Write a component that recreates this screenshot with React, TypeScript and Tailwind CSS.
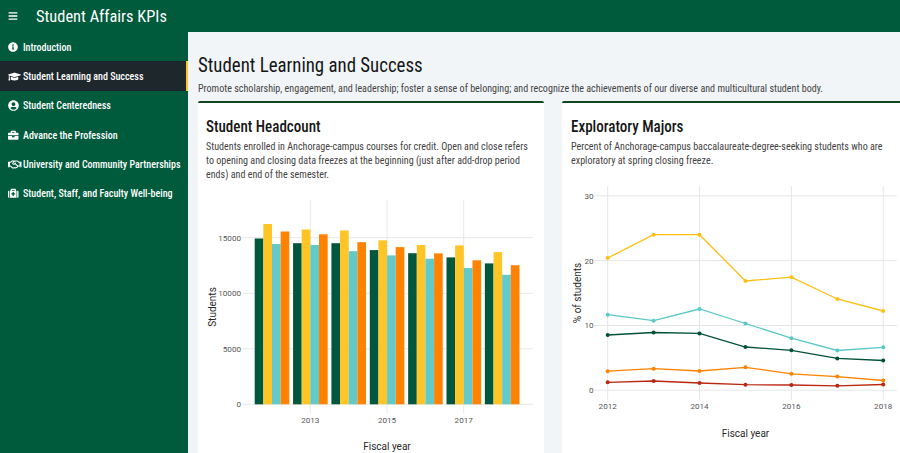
import type { ReactNode } from 'react';
import { FaBars, FaInfoCircle, FaGraduationCap, FaUserCircle, FaBriefcase, FaRegHandshake, FaMedkit } from 'react-icons/fa';

const nav: { icon: ReactNode; label: string; active?: boolean }[] = [
  { icon: <FaInfoCircle size={10} />, label: 'Introduction' },
  { icon: <FaGraduationCap className="h-[11px] w-[13px]" />, label: 'Student Learning and Success', active: true },
  { icon: <FaUserCircle className="h-[11px] w-[11px]" />, label: 'Student Centeredness' },
  { icon: <FaBriefcase className="h-[10.5px] w-[10.5px]" />, label: 'Advance the Profession' },
  { icon: <FaRegHandshake className="h-[11px] w-[13.5px]" />, label: 'University and Community Partnerships' },
  { icon: <FaMedkit className="h-[10.5px] w-[10.5px]" />, label: 'Student, Staff, and Faculty Well-being' },
];

const barColors = ['#00573d', '#ffc425', '#63c9c9', '#ff8200'];
const barTops = [
  [238.5, 224, 244, 231.5],
  [243.2, 229.5, 245, 234.3],
  [243.2, 230.5, 251.2, 242.2],
  [250.1, 240.3, 255.4, 247.1],
  [253.2, 245, 258.7, 253.4],
  [257.4, 245.4, 268, 260.3],
  [263.4, 252.1, 274.8, 265.2],
];

const series = [
  { color: '#ffbf12', ys: [258, 234.7, 234.7, 281, 277.2, 299, 311] },
  { color: '#5bc8c8', ys: [314.7, 320.7, 309, 323.5, 338.2, 350.5, 347.3] },
  { color: '#005137', ys: [335, 332.5, 333.4, 347, 350.3, 358.4, 360.5] },
  { color: '#ff8200', ys: [371.2, 368.7, 371, 367.3, 373.8, 376.6, 380.5] },
  { color: '#b9270f', ys: [382.3, 381, 383, 384.7, 385, 385.8, 384.5] },
];
const lineX = (i: number) => 607.7 + i * 45.92;

function BarChart() {
  return (
    <svg width="346" height="268" viewBox="198 185 346 268" className="block font-[Roboto,sans-serif] [font-stretch:100%]">
      <g stroke="#e8e8e8" strokeWidth="1">
        {[237.7, 293.3, 348.8, 404.3].map((y) => <path key={y} d={`M242 ${y}H533`} />)}
        {[310.3, 387, 463.7].map((x) => <path key={x} d={`M${x} 200V413`} />)}
      </g>
      {barTops.map((group, g) =>
        group.map((y, i) => (
          <rect key={`${g}-${i}`} x={254.7 + g * 38.36 + i * 8.65} y={y} width="8.65" height={404.3 - y} fill={barColors[i]} />
        )),
      )}
      <g fill="#555" fontSize="8.1" textAnchor="end">
        <text x="241" y="240.7">15000</text>
        <text x="241" y="296.3">10000</text>
        <text x="241" y="351.8">5000</text>
        <text x="241" y="407.2">0</text>
      </g>
      <g fill="#555" fontSize="8.1" textAnchor="middle">
        <text x="310.3" y="422.8">2013</text>
        <text x="387" y="422.8">2015</text>
        <text x="463.7" y="422.8">2017</text>
      </g>
      <g fill="#2a2a2a" fontSize="10" textAnchor="middle">
        <text x="387" y="450.4">Fiscal year</text>
        <text transform="translate(216 307) rotate(-90)">Students</text>
      </g>
    </svg>
  );
}

function LineChart() {
  return (
    <svg width="338" height="273" viewBox="562 180 338 273" className="block font-[Roboto,sans-serif] [font-stretch:100%]">
      <g stroke="#e4e7e8" strokeWidth="1">
        {[195.8, 260.6, 325.5, 390.2].map((y) => <path key={y} d={`M594 ${y}H897`} />)}
        {[0, 2, 4, 6].map((i) => <path key={i} d={`M${lineX(i)} 186V400`} />)}
      </g>
      {series.map(({ color, ys }) => (
        <g key={color} fill={color}>
          <polyline points={ys.map((y, i) => `${lineX(i)},${y}`).join(' ')} fill="none" stroke={color} strokeWidth="1.3" />
          {ys.map((y, i) => <circle key={i} cx={lineX(i)} cy={y} r="2" />)}
        </g>
      ))}
      <g fill="#555" fontSize="8.1" textAnchor="end">
        <text x="593.5" y="198.7">30</text>
        <text x="593.5" y="263.5">20</text>
        <text x="593.5" y="328.4">10</text>
        <text x="593.5" y="393.1">0</text>
      </g>
      <g fill="#555" fontSize="8.1" textAnchor="middle">
        {[0, 2, 4, 6].map((i) => <text key={i} x={lineX(i)} y="408.8">{2012 + i}</text>)}
      </g>
      <g fill="#2a2a2a" fontSize="10" textAnchor="middle">
        <text x="745.5" y="436.6">Fiscal year</text>
        <text transform="translate(581 293) rotate(-90)">% of students</text>
      </g>
    </svg>
  );
}

export default function App() {
  return (
    <div className="flex h-[453px] w-[900px] flex-col overflow-hidden bg-[#005a3c] font-['Roboto_Condensed',Roboto,sans-serif] [font-stretch:75%]">
      <header className="flex h-8 shrink-0 items-center text-white">
        <FaBars size={10} className="ml-2" />
        <h1 className="ml-[18px] origin-left scale-x-95 text-[17.25px] leading-8 whitespace-nowrap">Student Affairs KPIs</h1>
      </header>
      <div className="flex min-h-0 flex-1">
        <nav className="w-[188px] shrink-0 text-white">
          {nav.map((item) => (
            <a
              key={item.label}
              className={`flex h-[29.3px] items-center border-r-2 pt-px pl-2 text-[10.5px] font-[470] whitespace-nowrap ${item.active ? 'border-[#ffc425] bg-[#1e282c]' : 'border-transparent'}`}
            >
              <span className="flex w-[15.3px] shrink-0">{item.icon}</span>
              <span className="origin-left scale-x-[0.955] leading-[15px]">{item.label}</span>
            </a>
          ))}
        </nav>
        <main className="flex min-w-0 flex-1 flex-col bg-[#f1f5f8] pl-[10px]">
          <h2 className="mt-[22px] origin-left scale-x-95 text-[19.85px] leading-6 whitespace-nowrap text-[#161616]">Student Learning and Success</h2>
          <p className="mt-[4px] origin-left scale-x-95 text-[10.6px] leading-[14px] whitespace-nowrap text-[#444]">
            Promote scholarship, engagement, and leadership; foster a sense of belonging; and recognize the achievements of our diverse and multicultural student body.
          </p>
          <div className="mt-[5px] flex flex-1 gap-[18px]">
            <section className="w-[346px] shrink-0 rounded-t-[2px] border-t-2 border-[#10451f] bg-white">
              <div className="h-[82px] pt-[14px] pl-[8.3px] whitespace-nowrap">
                <h3 className="origin-left scale-x-95 text-[15.85px] leading-5 font-[470] text-[#161616]">Student Headcount</h3>
                <p className="mt-[3px] origin-left scale-x-95 text-[10.6px] leading-[14px] text-[#444]">
                  Students enrolled in Anchorage-campus courses for credit. Open and close refers<br />
                  to opening and closing data freezes at the beginning (just after add-drop period<br />
                  ends) and end of the semester.
                </p>
              </div>
              <BarChart />
            </section>
            <section className="w-[338px] shrink-0 rounded-tl-[2px] border-t-2 border-[#10451f] bg-white">
              <div className="h-[77px] pt-[14px] pl-[9px] whitespace-nowrap">
                <h3 className="origin-left scale-x-95 text-[15.85px] leading-5 font-[470] text-[#161616]">Exploratory Majors</h3>
                <p className="mt-[3px] origin-left scale-x-95 text-[10.6px] leading-[14px] text-[#444]">
                  Percent of Anchorage-campus baccalaureate-degree-seeking students who are<br />
                  exploratory at spring closing freeze.
                </p>
              </div>
              <LineChart />
            </section>
          </div>
        </main>
      </div>
    </div>
  );
}
